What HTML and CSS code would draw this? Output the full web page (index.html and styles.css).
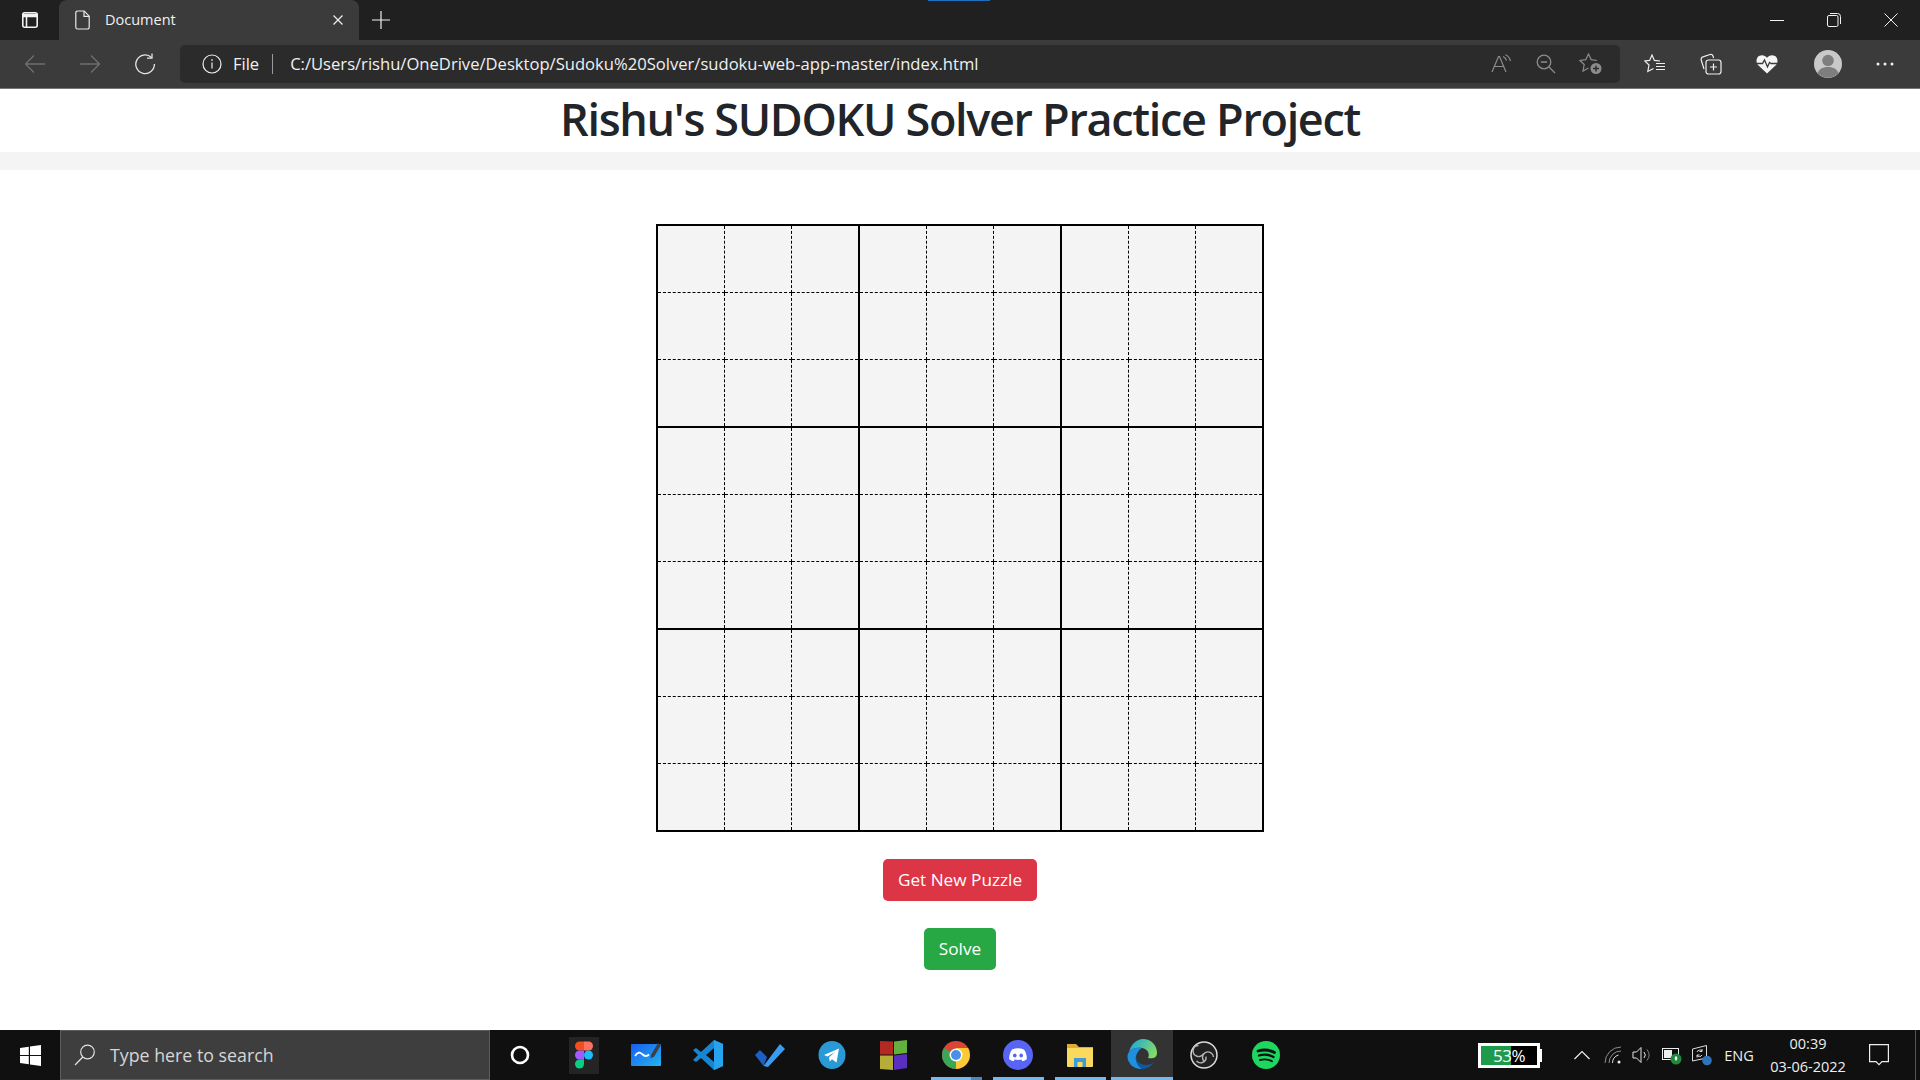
FILE: index.html
```html
<!DOCTYPE html>
<html lang="en">
<head>
    <meta charset="UTF-8">
    <title>Document</title>
    <link rel="stylesheet" href="styles.css">
</head>
<body>
    <!-- Browser tabs -->
    <div class="tabbar">
        <span class="capture-mark"></span>
        <div class="tab-toggle">
            <svg width="18" height="18" viewBox="0 0 18 18" fill="none" stroke="#f2f2f2" stroke-width="1.6"><rect x="1.8" y="1.8" width="14.4" height="14.4" rx="2"/><path d="M2 3.5h14v2H2z" fill="#f2f2f2"/><path d="M5.5 5v11"/></svg>
        </div>
        <div class="tab">
            <svg width="16" height="20" viewBox="0 0 16 20" fill="none" stroke="#e8e8e8" stroke-width="1.2"><path d="M2.6 1h6.6l5 5.2v11a1.8 1.8 0 0 1-1.8 1.8H2.6a1.8 1.8 0 0 1-1.8-1.8V2.8A1.8 1.8 0 0 1 2.6 1z"/><path d="M9 1v5.4h5.2"/></svg>
            <span class="tab-title">Document</span>
            <svg class="tab-close" width="12" height="12" viewBox="0 0 12 12" stroke="#efefef" stroke-width="1.2"><path d="M1.5 1.5l9 9M10.5 1.5l-9 9"/></svg>
        </div>
        <div class="new-tab">
            <svg width="18" height="18" viewBox="0 0 18 18" stroke="#efefef" stroke-width="1.2"><path d="M9 0v18M0 9h18"/></svg>
        </div>
        <div class="window-btns">
            <div class="window-btn"><svg width="14" height="14" viewBox="0 0 14 14" stroke="#f2f2f2"><path d="M0 7.5h14"/></svg></div>
            <div class="window-btn"><svg width="14" height="14" viewBox="0 0 14 14" fill="none" stroke="#f2f2f2"><rect x="0.5" y="2.5" width="10.5" height="11" rx="1.5"/><path d="M3 .5h7.5a3 3 0 0 1 3 3V11"/></svg></div>
            <div class="window-btn"><svg width="14" height="14" viewBox="0 0 14 14" stroke="#f2f2f2"><path d="M.5.5l13 13M13.5.5l-13 13"/></svg></div>
        </div>
    </div>

    <!-- Browser toolbar -->
    <div class="toolbar">
        <div class="nav-btn"><svg width="22" height="20" viewBox="0 0 22 20" fill="none" stroke="#6f6f6f" stroke-width="1.3"><path d="M21 10H1.500M10 1.500L1.500 10l8.500 8.500"/></svg></div>
        <div class="nav-btn"><svg width="22" height="20" viewBox="0 0 22 20" fill="none" stroke="#6f6f6f" stroke-width="1.3"><path d="M1 10h19.500M12 1.500l8.500 8.500-8.500 8.500"/></svg></div>
        <div class="nav-btn"><svg width="22" height="22" viewBox="0 0 22 22" fill="none" stroke="#e6e6e6" stroke-width="1.3"><path d="M17.500 4.500A9.300 9.300 0 1 0 20.400 11"/><path d="M18 .5v4.600h-5"/></svg></div>
        <div class="address">
            <svg class="info-icon" width="20" height="20" viewBox="0 0 20 20" fill="none" stroke="#ededed" stroke-width="1.2"><circle cx="10" cy="10" r="9"/><path d="M10 8.600v6"/><path d="M10 5.200v1.600" stroke-width="1.5"/></svg>
            <span class="site-label">File</span>
            <span class="address-sep"></span>
            <span class="url">C:/Users/rishu/OneDrive/Desktop/Sudoku%20Solver/sudoku-web-app-master/index.html</span>
            <div class="address-icons">
                <svg width="22" height="20" viewBox="0 0 22 20" fill="none" stroke="#8c8c8c" stroke-width="1.2"><path d="M1 18L7.500 2.500h1L15 18M3.500 12.500h9"/><path d="M12 2.500a6 6 0 0 1 3.500 4M14.500 .8a9 9 0 0 1 5 6.200"/></svg>
                <svg width="20" height="20" viewBox="0 0 20 20" fill="none" stroke="#8c8c8c" stroke-width="1.3"><circle cx="8" cy="8" r="6.800"/><path d="M4.800 8h6.400M13 13l6 6"/></svg>
                <svg width="24" height="22" viewBox="0 0 24 22" fill="none" stroke="#8c8c8c" stroke-width="1.2"><path d="M18 7.500L12.200 6.600 9.500 1 6.800 6.600 1 7.500 5.200 11.500 4 18l5.500-3"/><circle cx="17" cy="15.500" r="5.500" fill="#8c8c8c" stroke="none"/><path d="M17 12.500v6M14 15.500h6" stroke="#2b2b2b" stroke-width="1.4"/></svg>
            </div>
        </div>
        <div class="tool-icons">
            <div class="tool-btn"><svg width="22" height="20" viewBox="0 0 22 20" fill="none" stroke="#efefef" stroke-width="1.2"><path d="M16 7L10.400 6.400 8 1 5.600 6.400 .8 7 5 11 3.800 17.500 9.500 14.500"/><path d="M12 9.500h9M12 12.500h9M12 15.500h9"/></svg></div>
            <div class="tool-btn"><svg width="22" height="22" viewBox="0 0 22 22" fill="none" stroke="#efefef" stroke-width="1.2"><path d="M4 16L1.200 7a2.500 2.500 0 0 1 1.700-3.100L10 1.500a2.500 2.500 0 0 1 3 1.500l.6 2"/><rect x="6" y="7" width="15" height="14" rx="2.500"/><path d="M13.500 10.500v7M10 14h7"/></svg></div>
            <div class="tool-btn"><svg width="22" height="20" viewBox="0 0 22 20"><path d="M11 19.500L2 11C-.5 8 .4 3.500 3 2c3-1.700 6-.8 8 1.800 2-2.600 5-3.500 8-1.800 2.600 1.500 3.500 6 1 9z" fill="#f5f5f5"/><path d="M1 9.500h5.500l2-3.500 3 7 2-4.500 1.500 1h6" fill="none" stroke="#3b3b3b" stroke-width="1.300"/></svg></div>
            <div class="avatar-btn"><svg width="28" height="28" viewBox="0 0 28 28"><circle cx="14" cy="14" r="14" fill="#c9c9c9"/><circle cx="14" cy="10.500" r="5.800" fill="#7e7e7e"/><path d="M3.500 23c2-4.500 6-6 10.500-6s8.500 1.500 10.500 6a14 14 0 0 1-21 0z" fill="#7e7e7e"/></svg></div>
            <div class="tool-btn tool-btn-more"><svg width="18" height="4" viewBox="0 0 18 4" fill="#efefef"><circle cx="2" cy="2" r="1.500"/><circle cx="9" cy="2" r="1.500"/><circle cx="16" cy="2" r="1.500"/></svg></div>
        </div>
    </div>

    <!-- Page -->
    <div class="page">
        <h1 class="page-title">Rishu's SUDOKU Solver Practice Project</h1>
        <div class="page-strip"></div>

        <table class="board">
            <tr><td></td><td></td><td></td><td></td><td></td><td></td><td></td><td></td><td></td></tr>
            <tr><td></td><td></td><td></td><td></td><td></td><td></td><td></td><td></td><td></td></tr>
            <tr><td></td><td></td><td></td><td></td><td></td><td></td><td></td><td></td><td></td></tr>
            <tr><td></td><td></td><td></td><td></td><td></td><td></td><td></td><td></td><td></td></tr>
            <tr><td></td><td></td><td></td><td></td><td></td><td></td><td></td><td></td><td></td></tr>
            <tr><td></td><td></td><td></td><td></td><td></td><td></td><td></td><td></td><td></td></tr>
            <tr><td></td><td></td><td></td><td></td><td></td><td></td><td></td><td></td><td></td></tr>
            <tr><td></td><td></td><td></td><td></td><td></td><td></td><td></td><td></td><td></td></tr>
            <tr><td></td><td></td><td></td><td></td><td></td><td></td><td></td><td></td><td></td></tr>
        </table>

        <button class="btn btn-new">Get New Puzzle</button>
        <button class="btn btn-solve">Solve</button>
    </div>

    <!-- Windows taskbar -->
    <div class="taskbar">
        <div class="start"><svg width="21" height="21" viewBox="0 0 21 21" fill="#fff"><path d="M0 3l8.800-1.300V10H0zM10 1.500L21 0v10H10zM0 11h8.800v8.300L0 18zM10 11h11v10l-11-1.600z"/></svg></div>
        <div class="search">
            <svg width="22" height="22" viewBox="0 0 22 22" fill="none" stroke="#e4e4e4" stroke-width="1.200"><circle cx="13.500" cy="8" r="6.800"/><path d="M8.800 13L1 21"/></svg>
            <span class="search-text">Type here to search</span>
        </div>
        <div class="apps">
            <div class="app app-cortana"><svg width="20" height="20" viewBox="0 0 20 20" fill="none" stroke="#fff" stroke-width="2.600"><circle cx="10" cy="10" r="8"/></svg></div>
            <div class="app app-figma"><svg width="20" height="30" viewBox="0 0 20 30"><path d="M10 1H5.500a4.500 4.500 0 0 0 0 9H10z" fill="#f24e1e"/><path d="M10 1h4.500a4.500 4.500 0 0 1 0 9H10z" fill="#ff7262"/><path d="M10 10H5.500a4.500 4.500 0 0 0 0 9H10z" fill="#a259ff"/><circle cx="14.500" cy="14.500" r="4.500" fill="#1abcfe"/><path d="M5.500 19H10v4.500a4.500 4.500 0 1 1-4.500-4.500z" fill="#0acf83"/></svg></div>
            <div class="app"><svg width="32" height="30" viewBox="0 0 32 30"><defs><linearGradient id="boardFill" x1="0" y1="0" x2="1" y2="1"><stop offset="0" stop-color="#1a5cf0"/><stop offset="1" stop-color="#23b5ee"/></linearGradient></defs><rect x="1" y="4" width="30" height="22" rx="1" fill="url(#boardFill)"/><path d="M5 16c2.500-4 5-4 7-2s4.500 3 7 .5" fill="none" stroke="#fff" stroke-width="1.800"/><path d="M21 15l7-12 3 1.800-7 12-3.500 1.500z" fill="#3a3f48"/></svg></div>
            <div class="app"><svg width="30" height="30" viewBox="0 0 30 30"><path d="M21 0l9 4v22l-9 4L8 18l-5 4-3-2 5-5-5-5 3-2 5 4z" fill="#1786d2"/><path d="M21 8l-8 7 8 7z" fill="#101010"/><path d="M21 0l9 4v22l-9 4z" fill="#27a3ee"/></svg></div>
            <div class="app"><svg width="32" height="26" viewBox="0 0 32 26"><path d="M1 13l5-5 7 7-3.500 9z" fill="#1d5fc4"/><path d="M9.500 24L26 2l5 5-17 18z" fill="#3a9cf0"/></svg></div>
            <div class="app"><svg width="28" height="30" viewBox="0 0 28 30"><ellipse cx="14" cy="15" rx="13.500" ry="14" fill="#2a9ad6"/><path d="M6 15l15-6.500-2.500 14-4.500-3.300-2.300 2.300-.6-4.300 6-5.200-7.600 4.500z" fill="#fff"/></svg></div>
            <div class="app"><svg width="30" height="32" viewBox="0 0 30 32"><path d="M1 2l13 .5v13H1z" fill="#b42a22"/><path d="M15 2.500L28 1v13l-13 1.500z" fill="#64b03c"/><path d="M1 16.500h13V31L1 30z" fill="#b5ad3a"/><path d="M15 16.500l13-1.500v14l-13 2z" fill="#5a2fc0"/></svg></div>
            <div class="app app-open app-stacked"><svg width="28" height="28" viewBox="0 0 28 28"><circle cx="14" cy="14" r="14" fill="#db4437"/><path d="M14 14L1.900 7A14 14 0 0 0 14 28z" fill="#3aa757"/><path d="M14 14V28A14 14 0 0 0 26.100 7H14z" fill="#fcc934"/><circle cx="14" cy="14" r="6.500" fill="#fff"/><circle cx="14" cy="14" r="5" fill="#4a90e8"/></svg></div>
            <div class="app app-open"><svg width="30" height="30" viewBox="0 0 30 30"><circle cx="15" cy="15" r="15" fill="#5865f2"/><path d="M9 9.500c4-1.700 8-1.700 12 0 2 3 3 6 2.800 9.800-1.400 1-2.800 1.700-4.300 2l-1.200-1.800c-2.200.6-4.400.6-6.600 0L10.500 21.300c-1.500-.3-2.900-1-4.300-2C6 15.500 7 12.500 9 9.500z" fill="#fff"/><ellipse cx="11.800" cy="15.500" rx="1.800" ry="2.100" fill="#5865f2"/><ellipse cx="18.200" cy="15.500" rx="1.800" ry="2.100" fill="#5865f2"/></svg></div>
            <div class="app app-open"><svg width="28" height="28" viewBox="0 0 28 28"><path d="M1 3h9l3 3h14v19H1z" fill="#e2ab2e"/><path d="M1 7h26v18a1 1 0 0 1-1 1H2a1 1 0 0 1-1-1z" fill="#fbd95f"/><path d="M8 26v-9h12v9h-3.500v-5h-5v5z" fill="#3f9bd6"/></svg></div>
            <div class="app app-active"><svg width="30" height="30" viewBox="0 0 30 30"><defs><linearGradient id="edgeTop" x1="0" y1="0.300" x2="1" y2="0.700"><stop offset="0" stop-color="#1fa8d8"/><stop offset="1" stop-color="#86de62"/></linearGradient></defs><path d="M2 13C4 5 10 0 16 0c8 0 14 6 14 14 0 5-5 6-9 5 2-4 0-9-6-10C9 8 4 10 2 13z" fill="url(#edgeTop)"/><path d="M2 13C0 15 0 20 2 23c3 6 9 7 13 7-4-3-7-8-6-13 1-4 4-7 6-8C9 8 4 10 2 13z" fill="#1f8fe0"/><path d="M15 30c-4-3-7-8-6-13 0 6 5 9 10 9 3 0 6-1 8-3-3 5-8 7-12 7z" fill="#0c59a4"/></svg></div>
            <div class="app"><svg width="28" height="28" viewBox="0 0 28 28" fill="none" stroke="#b5b5b5"><circle cx="14" cy="14" r="13" fill="#202020" stroke="#dcdcdc" stroke-width="1.500"/><path d="M8.500 4.500a5.500 5.500 0 1 0 5 8M23.500 16a5.500 5.500 0 1 0-8.500 5M6.500 20a5.500 5.500 0 0 0 9.500-4.500" stroke-width="1.400"/></svg></div>
            <div class="app"><svg width="28" height="28" viewBox="0 0 28 28" fill="none" stroke="#101010" stroke-linecap="round"><circle cx="14" cy="14" r="14" fill="#1ed760" stroke="none"/><path d="M6 10c6-1.800 11-1.300 16.500 1.500" stroke-width="2.800"/><path d="M7 14.500c5-1.400 10-1 14.500 1.500" stroke-width="2.300"/><path d="M8 19c4.500-1.100 8.500-.8 12 1.200" stroke-width="1.900"/></svg></div>
        </div>
        <div class="tray">
            <div class="battery-box">
                <div class="battery"><span class="battery-text">53%</span></div>
                <span class="battery-tip"></span>
            </div>
            <div class="tray-item tray-chevron"><svg width="16" height="10" viewBox="0 0 16 10" fill="none" stroke="#efefef" stroke-width="1.200"><path d="M.5 9L8 1.500 15.500 9"/></svg></div>
            <div class="tray-item tray-wifi"><svg width="18" height="18" viewBox="0 0 18 18" fill="none" stroke="#dcdcdc"><path d="M1 17A16 16 0 0 1 17 1M5 17A12 12 0 0 1 17 5" stroke="#8e8e8e"/><path d="M8.500 17a8.500 8.500 0 0 1 6-8"/><circle cx="15" cy="16" r="1.500" fill="#eee" stroke="none"/></svg></div>
            <div class="tray-item tray-speaker"><svg width="20" height="18" viewBox="0 0 20 18" fill="none" stroke="#e4e4e4"><path d="M1 6h3.500L9 1.500v15L4.500 12H1z"/><path d="M12 6a4.500 4.500 0 0 1 0 6"/><path d="M15 3.500a9 9 0 0 1 0 11" stroke="#7d7d7d"/></svg></div>
            <div class="tray-item tray-power"><svg width="20" height="20" viewBox="0 0 20 20"><rect x="0.500" y="3.500" width="16" height="11" fill="#101010" stroke="#eee"/><rect x="2" y="5" width="8" height="8" fill="#eee"/><circle cx="14" cy="14" r="5.500" fill="#1f8a3c"/><path d="M14 11c-1.800 1.200-1.800 3 0 5 1.800-2 1.800-3.800 0-5z" fill="#fff"/></svg></div>
            <div class="tray-item tray-device"><svg width="22" height="22" viewBox="0 0 22 22" fill="none" stroke="#dcdcdc"><path d="M1.500 5L15.500 1.500V14l-14 3z"/><path d="M11 7a3 3 0 0 0-5 1M6 11.500a3 3 0 0 0 5-.5M11 5v2.500H8.500M6 13.500V11h2.500"/><circle cx="16" cy="16.500" r="4.800" fill="#2f73bb" stroke="none"/></svg></div>
            <div class="tray-item tray-lang">ENG</div>
            <div class="tray-item tray-clock"><span>00:39</span><span>03-06-2022</span></div>
            <div class="tray-item tray-notify"><svg width="20" height="22" viewBox="0 0 20 22" fill="none" stroke="#efefef" stroke-width="1.200"><path d="M.6.600h18.800v17H13l-3 3-3-3H.6z"/></svg></div>
            <div class="show-desktop"></div>
        </div>
    </div>
</body>
</html>
```

FILE: styles.css
```css
* {
    box-sizing: border-box;
}

body {
    margin: 0;
    height: 1080px;
    overflow: hidden;
    display: flex;
    flex-direction: column;
    font-family: "Open Sans", "Noto Sans", sans-serif;
    background-color: #fff;
}

/* Browser tabs */
.tabbar {
    position: relative;
    height: 40px;
    flex: none;
    display: flex;
    align-items: flex-end;
    background-color: #202020;
}

.capture-mark {
    position: absolute;
    top: 0;
    left: 928px;
    width: 62px;
    height: 1px;
    background-color: #1d6fc0;
}

.tab-toggle {
    width: 59px;
    height: 40px;
    display: flex;
    align-items: center;
    justify-content: center;
}

.tab {
    width: 300px;
    height: 40px;
    display: flex;
    align-items: center;
    padding: 0 0 1px 16px;
    background-color: #3b3b3b;
    border-radius: 8px 8px 0 0;
}

.tab-title {
    margin-left: 14px;
    margin-bottom: 1px;
    font-size: 14.5px;
    color: #f0f0f0;
}

.tab-close {
    margin-left: auto;
    margin-right: 15px;
}

.new-tab {
    width: 43px;
    height: 40px;
    display: flex;
    align-items: center;
    justify-content: center;
}

.window-btns {
    margin-left: auto;
    height: 40px;
    display: flex;
    padding-right: 1px;
}

.window-btn {
    width: 57px;
    display: flex;
    align-items: center;
    justify-content: center;
}

/* Browser toolbar */
.toolbar {
    height: 49px;
    flex: none;
    display: flex;
    align-items: center;
    padding: 0 0 1px 7px;
    background-color: #3b3b3b;
    border-bottom: 1px solid #777;
}

.nav-btn {
    width: 55px;
    display: flex;
    align-items: center;
    justify-content: center;
}

.address {
    width: 1440px;
    height: 38px;
    margin-left: 8px;
    display: flex;
    align-items: center;
    padding-left: 22px;
    background-color: #2b2b2b;
    border-radius: 5px;
}

.site-label {
    margin-left: 11px;
    font-size: 16.5px;
    color: #f0f0f0;
}

.address-sep {
    width: 1px;
    height: 20px;
    margin: 0 17px 0 13px;
    background-color: #9a9a9a;
}

.url {
    font-size: 16.6px;
    color: #f0f0f0;
}

.address-icons {
    margin-left: auto;
    margin-right: 17px;
    width: 112px;
    display: flex;
    align-items: center;
    justify-content: space-between;
}

.tool-icons {
    display: flex;
    align-items: center;
    flex: 1;
    padding-left: 7px;
}

.tool-btn {
    width: 56px;
    display: flex;
    align-items: center;
    justify-content: center;
}

.tool-btn-more {
    width: 48px;
}

.avatar-btn {
    width: 66px;
    display: flex;
    align-items: center;
    justify-content: center;
}

/* Page */
.page {
    flex: 1;
    display: flex;
    flex-direction: column;
    align-items: center;
}

.page-title {
    width: 100%;
    height: 63px;
    margin: 0;
    font-size: 45px;
    font-weight: 550;
    letter-spacing: -1.32px;
    line-height: 60px;
    text-align: center;
    color: #212529;
}

.page-strip {
    width: 100%;
    height: 18px;
    background-color: #f4f4f4;
}

.board {
    width: 608px;
    height: 608px;
    margin-top: 54px;
    border-collapse: collapse;
    table-layout: fixed;
    background-color: #f4f4f4;
    border: 2px solid #000;
}

.board tr {
    height: 67.2px;
}

.board td {
    padding: 0;
    border: 1px dashed #000;
}

.board td:nth-child(3n) {
    border-right: 2px solid #000;
}

.board tr:nth-child(3n) td {
    border-bottom: 2px solid #000;
}

.btn {
    display: block;
    padding: 7px 15px;
    border: none;
    border-radius: 5px;
    font-family: inherit;
    font-size: 17.2px;
    line-height: 28px;
    color: #fff;
}

.btn-new {
    margin-top: 27px;
    background-color: #dc3545;
}

.btn-solve {
    margin-top: 27px;
    background-color: #28a745;
}

/* Windows taskbar */
.taskbar {
    height: 50px;
    flex: none;
    display: flex;
    background-color: #101010;
    color: #eee;
}

.start {
    width: 60px;
    display: flex;
    align-items: center;
    justify-content: center;
}

.search {
    width: 430px;
    display: flex;
    align-items: center;
    padding-left: 13px;
    margin-right: 1px;
    background-color: #3e3e3e;
    border: 1px solid #5c5c5c;
}

.search-text {
    margin-left: 14px;
    font-size: 17.8px;
    color: #d6d6d6;
}

.apps {
    display: flex;
}

.app {
    width: 62px;
    display: flex;
    align-items: center;
    justify-content: center;
}

.app-cortana {
    padding-right: 4px;
}

.app-open {
    background: linear-gradient(#76b9ed, #76b9ed) center bottom / 51px 3px no-repeat;
}

.app-stacked {
    background:
        linear-gradient(to right, #76b9ed 40px, #4f86b3 40px) center bottom / 51px 3px no-repeat;
}

.app-figma svg {
    width: 30px;
    padding: 3px 5px;
    height: 37px;
    background-color: #242424;
}

.app-active {
    background-color: #333;
    border-bottom: 3px solid #76b9ed;
}

.tray {
    margin-left: auto;
    display: flex;
    align-items: center;
    height: 50px;
}

.battery-box {
    display: flex;
    align-items: center;
    margin-right: 24px;
}

.battery {
    width: 62px;
    height: 25px;
    display: flex;
    align-items: center;
    justify-content: center;
    border: 3px solid #fff;
    background: linear-gradient(to right, #1e9a4b 53%, #000 53%);
}

.battery-text {
    font-size: 17px;
    letter-spacing: -0.5px;
    color: #fff;
}

.battery-tip {
    width: 2px;
    height: 13px;
    background-color: #fff;
}

.tray-item {
    height: 50px;
    display: flex;
    align-items: center;
    justify-content: center;
}

.tray-chevron { width: 32px; }
.tray-wifi { width: 30px; }
.tray-speaker { width: 27px; }
.tray-power { width: 33px; }
.tray-device { width: 28px; }

.tray-lang {
    width: 46px;
    font-size: 14.5px;
}

.tray-clock {
    width: 92px;
    flex-direction: column;
    gap: 3px;
    font-size: 14.5px;
    line-height: 20px;
}

.tray-notify {
    width: 50px;
}

.show-desktop {
    width: 5px;
    height: 50px;
    margin-left: 11px;
    border-left: 1px solid #555;
}
```
